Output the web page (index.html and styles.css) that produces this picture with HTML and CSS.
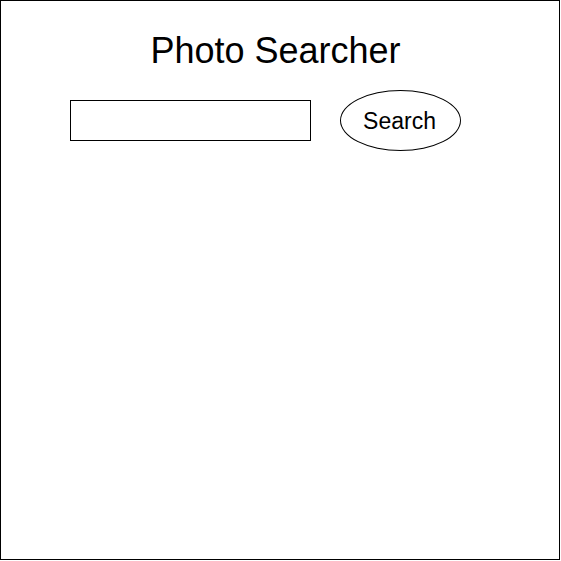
FILE: index.html
```html
<!DOCTYPE html>
<html>
<head>
<meta charset="utf-8">
<link rel="stylesheet" href="styles.css">
</head>
<body>
<div class="frame">
  <h1 class="title">Photo Searcher</h1>
  <div class="search-row">
    <input class="search-input" type="text">
    <button class="search-btn" type="button">Search</button>
  </div>
</div>
</body>
</html>
```
FILE: styles.css
```css
html, body {
  margin: 0;
  padding: 0;
  background: #ffffff;
}
body {
  font-family: "Liberation Sans", Arial, sans-serif;
  color: #000000;
}
.frame {
  box-sizing: border-box;
  width: 560px;
  height: 560px;
  border: 1px solid #000000;
  padding-top: 32px;
}
.title {
  margin: 0;
  padding-right: 9px;
  font-size: 36px;
  font-weight: normal;
  line-height: 36px;
  text-align: center;
}
.search-row {
  display: flex;
  align-items: center;
  gap: 29px;
  margin-top: 21px;
  padding-left: 69px;
}
.search-input {
  box-sizing: border-box;
  width: 241px;
  height: 41px;
  margin: 0;
  padding: 0 6px;
  border: 1px solid #000000;
  border-radius: 0;
  background: #ffffff;
  outline: none;
  font-family: "Liberation Sans", Arial, sans-serif;
  font-size: 16px;
}
.search-btn {
  box-sizing: border-box;
  width: 121px;
  height: 61px;
  margin: 0;
  padding: 2px 2px 0 0;
  border: 1px solid #000000;
  border-radius: 50%;
  background: #ffffff;
  color: #000000;
  font-family: "Liberation Sans", Arial, sans-serif;
  font-size: 23px;
  line-height: 23px;
  text-align: center;
  cursor: pointer;
}
```
